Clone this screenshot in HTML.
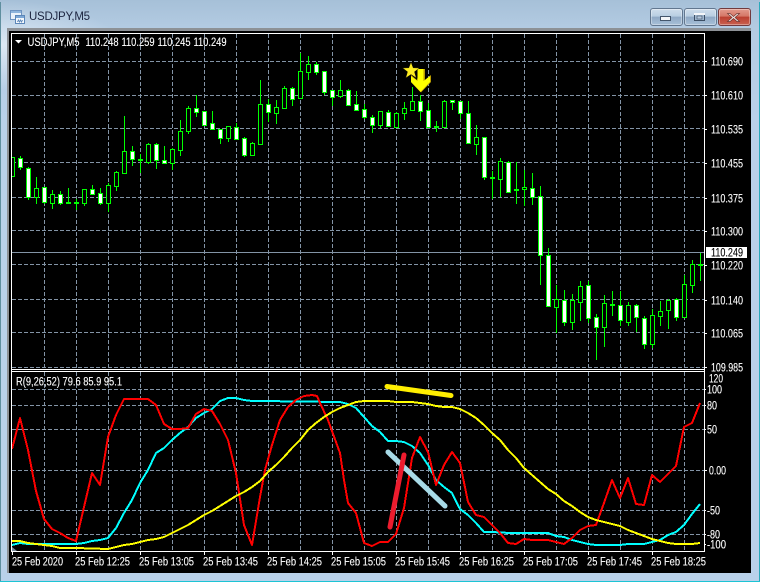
<!DOCTYPE html>
<html>
<head>
<meta charset="utf-8">
<title>USDJPY,M5</title>
<style>
html,body{margin:0;padding:0;background:#b9d1ea;}
body{width:760px;height:582px;overflow:hidden;position:relative;font-family:"Liberation Sans",sans-serif;}
#frame{position:absolute;left:0;top:0;width:760px;height:582px;background:linear-gradient(#a6c0d8 0,#b3cbe2 28px,#b9d1ea 120px,#b9d1ea 100%);}
#glow{position:absolute;left:1px;top:0;width:120px;height:90px;background:radial-gradient(ellipse at 0 50%,rgba(235,243,250,.75),rgba(235,243,250,0) 70%);}
#edgeB{position:absolute;left:0;top:581px;width:760px;height:1px;background:#1cc4d4;}
#edgeL{position:absolute;left:0;top:2px;width:1px;height:580px;background:#5f8f9f;}
#edgeR{position:absolute;left:759px;top:2px;width:1px;height:580px;background:#2aa9bb;}
#title{position:absolute;left:29px;top:10px;font-size:11.5px;line-height:15px;color:#1c2540;letter-spacing:-.25px;}
#inner{position:absolute;left:7px;top:28px;width:744px;height:545px;background:#8d9196;}
svg{position:absolute;left:0;top:0;}
.btn{position:absolute;top:8px;height:16px;width:31px;border:1px solid #62778f;border-radius:3px;box-sizing:content-box;background:linear-gradient(#cfdeec 0,#b8cee2 45%,#8fa9c5 50%,#a8c0d8 100%);box-shadow:inset 0 0 0 1px rgba(255,255,255,.35);}
#close{background:linear-gradient(#e39a8d 0,#d57767 45%,#bb3f30 50%,#c9604f 100%);border-color:#713a3e;}
</style>
</head>
<body>
<div id="frame"></div>
<div id="glow"></div>
<div id="edgeL"></div>
<div id="edgeR"></div>
<div id="edgeB"></div>
<div id="inner"></div>
<div id="title">USDJPY,M5</div>
<div class="btn" style="left:650px"></div>
<div class="btn" style="left:684px"></div>
<div class="btn" id="close" style="left:718px"></div>

<svg width="760" height="582" viewBox="0 0 760 582" xmlns="http://www.w3.org/2000/svg">
<!-- title icon -->
<g shape-rendering="crispEdges">
<rect x="10.5" y="10.5" width="11" height="9" fill="#eaf2fa" stroke="#6d93c0"/>
<rect x="11" y="11" width="10" height="2" fill="#8db4dc"/>
<rect x="15.5" y="15.5" width="9" height="8" fill="#f4f8fc" stroke="#5b86b8"/>
<rect x="16" y="16" width="8" height="2" fill="#7ba7d6"/>
<path d="M17.5 22l1-2 1 2 1-2 1 2 1-2" fill="none" stroke="#5b86b8"/>
</g>
<!-- window buttons -->
<rect x="660.5" y="16.5" width="10" height="4" fill="#f3f6f9" stroke="#44566c" shape-rendering="crispEdges"/>
<rect x="694.5" y="13.5" width="10" height="7" fill="#9fb7cf" stroke="#3c4e64" stroke-width="1" shape-rendering="crispEdges"/>
<rect x="694" y="13" width="11" height="2" fill="#f3f6f9" shape-rendering="crispEdges"/>
<rect x="697" y="16" width="5" height="3" fill="#b4c8dc" stroke="#3c4e64" stroke-width=".6"/>
<path d="M730 13.500l3.500 3 3.500-3h2.500l-4.500 4 4.500 4h-2.500l-3.500-3-3.500 3h-2.500l4.500-4-4.500-4z" fill="#f6ece9" stroke="#6e3a36" stroke-width=".7"/>

<!-- chart background -->
<rect x="9" y="31" width="742" height="542" fill="#000"/>

<!-- grid -->
<g stroke="#8394a6" stroke-width="1" stroke-dasharray="4 2" fill="none" shape-rendering="crispEdges">
<path d="M44.500 34V368M76.500 34V368M108.500 34V368M140.500 34V368M172.500 34V368M204.500 34V368M236.500 34V368M268.500 34V368M300.500 34V368M332.500 34V368M364.500 34V368M396.500 34V368M428.500 34V368M460.500 34V368M492.500 34V368M524.500 34V368M556.500 34V368M588.500 34V368M620.500 34V368M652.500 34V368M684.500 34V368"/>
<path d="M44.500 372V551M76.500 372V551M108.500 372V551M140.500 372V551M172.500 372V551M204.500 372V551M236.500 372V551M268.500 372V551M300.500 372V551M332.500 372V551M364.500 372V551M396.500 372V551M428.500 372V551M460.500 372V551M492.500 372V551M524.500 372V551M556.500 372V551M588.500 372V551M620.500 372V551M652.500 372V551M684.500 372V551"/>
<path d="M12 61.500H704M12 95.500H704M12 128.500H704M12 162.500H704M12 197.500H704M12 230.500H704M12 264.500H704M12 299.500H704M12 332.500H704M12 367.500H704"/>
<path d="M12 389.500H704M12 405.500H704M12 429.500H704M12 470.500H704M12 510.500H704M12 534.500H704"/>
</g>
<path d="M12 252.500H704" stroke="#8394a6" shape-rendering="crispEdges"/>

<!-- candles -->
<g shape-rendering="crispEdges">
<path fill="none" stroke="#00ff00" d="M20.500 156V170M28.500 167V200M36.500 177V204M44.500 187V204M52.500 190V209M60.500 191V205M68.500 188V204M76.500 199V210M84.500 189V206M92.500 185V194M100.500 188V205M108.500 183V212M116.500 171V191M124.500 116V173M132.500 146V166M140.500 154V173M148.500 143V164M156.500 143V169M164.500 146V163M172.500 148V170M180.500 120V156M188.500 106V134M196.500 95V117M204.500 111V126M212.500 111V129M220.500 129V144M228.500 126V142M236.500 123V139M244.500 137V157M252.500 142V156M260.500 80V145M268.500 99V122M276.500 100V124M284.500 86V109M292.500 87V106M300.500 53V98M308.500 56V80M316.500 62V75M324.500 71V95M332.500 90V106M340.500 80V98M348.500 89V105M356.500 91V110M364.500 104V119M372.500 115V133M380.500 111V128M388.500 110V126M396.500 112V127M404.500 102V120M412.500 87V111M420.500 95V121M428.500 103V127M436.500 121V132M444.500 100V127M452.500 100V110M460.500 101V119M468.500 101V143M476.500 125V155M484.500 137V180M492.500 171V199M500.500 158V197M508.500 161V193M516.500 162V204M524.500 170V206M532.500 173V205M540.500 186V285M548.500 248V307M556.500 285V333M564.500 290V326M572.500 294V330M580.500 281V321M588.500 281V323M596.500 314V360M604.500 295V347M612.500 291V316M620.500 291V326M628.500 302V326M636.500 304V332M644.500 316V349M652.500 309V348M660.500 301V326M668.500 299V329M676.500 298V321M684.500 275V318M692.500 260V293M700.500 253V281"/>
<path fill="#ffffff" stroke="#00ff00" d="M18.500 158.500h4v9h-4zM26.500 168.500h4v29h-4zM42.500 187.500h4v15h-4zM58.500 194.500h4v9h-4zM90.500 189.500h4v5h-4zM98.500 193.500h4v10h-4zM130.500 151.500h4v8h-4zM154.500 144.500h4v16h-4zM162.500 160.500h4v3h-4zM194.500 108.500h4v4h-4zM202.500 111.500h4v14h-4zM210.500 123.500h4v6h-4zM218.500 129.500h4v9h-4zM234.500 127.500h4v12h-4zM242.500 138.500h4v17h-4zM266.500 104.500h4v8h-4zM290.500 88.500h4v11h-4zM314.500 64.500h4v8h-4zM322.500 71.500h4v21h-4zM330.500 90.500h4v7h-4zM346.500 90.500h4v15h-4zM354.500 104.500h4v6h-4zM362.500 109.500h4v8h-4zM370.500 117.500h4v8h-4zM386.500 112.500h4v14h-4zM418.500 101.500h4v10h-4zM426.500 110.500h4v17h-4zM450.500 100.500h4v2h-4zM458.500 101.500h4v12h-4zM466.500 113.500h4v30h-4zM482.500 137.500h4v40h-4zM506.500 162.500h4v30h-4zM530.500 188.500h4v9h-4zM538.500 196.500h4v59h-4zM546.500 255.500h4v51h-4zM562.500 300.500h4v22h-4zM586.500 285.500h4v33h-4zM594.500 317.500h4v10h-4zM618.500 305.500h4v15h-4zM634.500 305.500h4v12h-4zM642.500 318.500h4v26h-4zM674.500 299.500h4v18h-4z"/>
<path fill="#000000" stroke="#00ff00" d="M11.500 157.500h3v19h-3zM34.500 188.500h4v9h-4zM50.500 194.500h4v9h-4zM82.500 189.500h4v14h-4zM106.500 185.500h4v18h-4zM114.500 172.500h4v14h-4zM122.500 151.500h4v22h-4zM146.500 144.500h4v18h-4zM170.500 149.500h4v14h-4zM178.500 131.500h4v19h-4zM186.500 108.500h4v23h-4zM226.500 126.500h4v12h-4zM250.500 143.500h4v12h-4zM258.500 104.500h4v40h-4zM274.500 107.500h4v6h-4zM282.500 88.500h4v20h-4zM298.500 71.500h4v27h-4zM306.500 64.500h4v8h-4zM338.500 90.500h4v6h-4zM378.500 111.500h4v14h-4zM394.500 113.500h4v14h-4zM402.500 108.500h4v5h-4zM410.500 101.500h4v9h-4zM442.500 101.500h4v26h-4zM474.500 137.500h4v7h-4zM498.500 161.500h4v18h-4zM522.500 187.500h4v2h-4zM554.500 299.500h4v8h-4zM570.500 300.500h4v22h-4zM578.500 286.500h4v16h-4zM602.500 303.500h4v24h-4zM626.500 305.500h4v17h-4zM650.500 315.500h4v29h-4zM658.500 311.500h4v5h-4zM666.500 300.500h4v10h-4zM682.500 284.500h4v33h-4zM690.500 264.500h4v21h-4z"/>
<path fill="none" stroke="#00ff00" stroke-width="2" d="M66 203h5M74 203h5M138 160h5M434 127h5M490 178h5M514 190h5M610 305h5M698 265h5"/>
</g>

<!-- arrow and star -->
<polygon points="419,69 425,69 425,80 431,75 431,82 421,92.500 411,82 411,75 417,80" fill="#b89a00"/>
<polygon points="417.500,69 423.500,69 423.500,81 430,76 430,82 420.500,92 411,82 411,76 417.500,81" fill="#ffff00"/>
<polygon points="411,62 413.200,67.800 419.500,68 414.500,71.800 416.300,78 411,74.500 405.700,78 407.500,71.800 402.500,68 408.800,67.800" fill="#ffee22" stroke="#1a1500" stroke-width=".5"/>

<!-- indicator lines -->
<g fill="none" stroke-width="2" stroke-linejoin="round" shape-rendering="crispEdges">
<polyline stroke="#00ffff" points="12,545 20,543 28,544 76,544 84,543 92,541 100,540 108,538 116,528 124,513 132,500 140,483 148,470 156,453 164,448 172,440 180,433 188,427 196,418 204,413 212,409 220,401 228,398 236,398 244,400 252,401 260,401 340,402 348,404 356,408 364,417 372,426 380,432 388,441 396,441 404,442 412,446 420,453 428,465 436,480 444,487 452,493 460,509 468,515 476,523 484,532 492,532 510,533 548,533 556,536 564,537 572,540 580,542 588,544 596,545 620,545 628,544 644,544 652,542 660,540 668,535 676,532 684,525 692,514 700,504"/>
<polyline stroke="#ff0000" points="12,449 20,418 28,450 36,491 44,519 52,529 60,533 68,538 76,541 92,473 100,485 108,437 116,415 124,399 148,399 156,405 164,424 172,429 180,429 188,428 196,414 204,409 212,411 220,424 228,440 236,473 244,525 252,545 260,497 265,470 272,445 280,420 288,407 296,400 304,396 312,395 317,396 320,403 328,420 336,442 340,453 344,480 348,503 356,513 364,543 372,546 380,542 388,542 396,534 404,508 412,458 420,437 428,452 436,485 444,465 452,452 460,463 468,502 476,515 484,517 492,525 500,533 508,543 516,544 524,539 532,540 548,540 556,542 564,544 572,538 580,530 588,526 596,525 604,503 612,480 620,498 628,478 636,504 644,505 652,475 660,482 668,474 676,466 684,427 692,423 700,403"/>
<polyline stroke="#ffff00" points="12,541 20,541 28,543 36,544 44,545 52,546 60,548 76,548 108,549 116,547 124,545 132,544 140,542 148,540 156,539 164,537 172,533 180,529 188,525 196,520 204,515 212,511 220,506 228,501 236,496 244,492 252,487 260,481 268,472 276,465 284,457 292,448 300,440 308,430 316,423 324,417 332,412 340,408 348,405 356,402 364,401 388,401 396,402 412,402 420,403 428,404 436,406 444,407 452,407 460,409 468,413 476,418 484,425 492,433 500,440 508,450 516,458 524,468 532,475 540,482 548,489 556,494 564,501 572,506 580,512 588,517 596,520 604,522 612,524 620,526 628,530 636,533 644,536 652,539 660,541 668,543 676,544 692,544 700,543"/>
</g>

<!-- hand-drawn trend lines -->
<g fill="none" stroke-width="5" stroke-linecap="round">
<path stroke="#ffee00" d="M387 386.500L451 395.500"/>
<path stroke="#a8dbe8" d="M388 452L445 506"/>
<path stroke="#ed1c2e" d="M404 455L390 527"/>
</g>

<!-- frame lines -->
<g shape-rendering="crispEdges" fill="#ffffff">
<rect x="11" y="33" width="694" height="1"/>
<rect x="11" y="33" width="1" height="519"/>
<rect x="704" y="33" width="1" height="519"/>
<rect x="11" y="369" width="694" height="1"/>
<rect x="11" y="371" width="694" height="1"/>
<rect x="11" y="551" width="694" height="1"/>
<path stroke="#ffffff" fill="none" d="M705 61.500h2M705 95.500h2M705 129.500h2M705 163.500h2M705 198.500h2M705 231.500h2M705 265.500h2M705 300.500h2M705 333.500h2M705 367.500h2M705 389.500h1M705 405.500h1M705 429.500h1M705 470.500h2M705 510.500h1M705 534.500h1M705 544.500h1"/>
<path stroke="#ffffff" fill="none" d="M12.500 552v3M76.500 552v3M140.500 552v3M204.500 552v3M268.500 552v3M332.500 552v3M396.500 552v3M460.500 552v3M524.500 552v3M588.500 552v3M652.500 552v3"/>
</g>
<polygon points="12,547 17,551 12,551" fill="#778899"/>
<polygon points="15,40 22,40 18.500,43.500" fill="#ffffff"/>

<!-- price label -->
<rect x="706" y="247" width="41" height="11" fill="#ffffff" shape-rendering="crispEdges"/>

<!-- text -->
<g font-family="'Liberation Sans',sans-serif" font-size="11.500" fill="#ffffff" stroke="#ffffff" stroke-width=".12">
<text x="27.500" y="46" textLength="52" lengthAdjust="spacingAndGlyphs">USDJPY,M5</text>
<text x="85.500" y="46" textLength="33" lengthAdjust="spacingAndGlyphs">110.248</text>
<text x="121.500" y="46" textLength="33" lengthAdjust="spacingAndGlyphs">110.259</text>
<text x="157.500" y="46" textLength="33" lengthAdjust="spacingAndGlyphs">110.245</text>
<text x="193.500" y="46" textLength="33" lengthAdjust="spacingAndGlyphs">110.249</text>
<text x="16" y="385.500" textLength="106" lengthAdjust="spacingAndGlyphs">R(9,26,52) 79.6 85.9 95.1</text>

<text x="711" y="65.500" textLength="32" lengthAdjust="spacingAndGlyphs">110.690</text>
<text x="711" y="99.500" textLength="32" lengthAdjust="spacingAndGlyphs">110.610</text>
<text x="711" y="133.500" textLength="32" lengthAdjust="spacingAndGlyphs">110.535</text>
<text x="711" y="167.500" textLength="32" lengthAdjust="spacingAndGlyphs">110.455</text>
<text x="711" y="202.500" textLength="32" lengthAdjust="spacingAndGlyphs">110.375</text>
<text x="711" y="235.500" textLength="32" lengthAdjust="spacingAndGlyphs">110.300</text>
<text x="711" y="256.500" textLength="32" lengthAdjust="spacingAndGlyphs" fill="#000000" stroke="#000000">110.249</text>
<text x="711" y="269.500" textLength="32" lengthAdjust="spacingAndGlyphs">110.220</text>
<text x="711" y="304.500" textLength="32" lengthAdjust="spacingAndGlyphs">110.140</text>
<text x="711" y="337.500" textLength="32" lengthAdjust="spacingAndGlyphs">110.065</text>
<text x="711" y="371.500" textLength="32" lengthAdjust="spacingAndGlyphs">109.985</text>

<text x="709" y="382.500" textLength="14" lengthAdjust="spacingAndGlyphs">120</text>
<text x="707" y="393.500" textLength="15" lengthAdjust="spacingAndGlyphs">100</text>
<text x="707" y="409.500" textLength="10" lengthAdjust="spacingAndGlyphs">80</text>
<text x="707" y="433.500" textLength="10" lengthAdjust="spacingAndGlyphs">50</text>
<text x="709" y="474.500" textLength="17" lengthAdjust="spacingAndGlyphs">0.00</text>
<text x="707" y="514.500" textLength="13" lengthAdjust="spacingAndGlyphs">-50</text>
<text x="707" y="538.500" textLength="13" lengthAdjust="spacingAndGlyphs">-80</text>
<text x="707" y="548.500" textLength="19" lengthAdjust="spacingAndGlyphs">-100</text>

<text x="12" y="565.500" textLength="51" lengthAdjust="spacingAndGlyphs">25 Feb 2020</text>
<text x="75" y="565.500" textLength="55" lengthAdjust="spacingAndGlyphs">25 Feb 12:25</text>
<text x="139" y="565.500" textLength="55" lengthAdjust="spacingAndGlyphs">25 Feb 13:05</text>
<text x="203" y="565.500" textLength="55" lengthAdjust="spacingAndGlyphs">25 Feb 13:45</text>
<text x="267" y="565.500" textLength="55" lengthAdjust="spacingAndGlyphs">25 Feb 14:25</text>
<text x="331" y="565.500" textLength="55" lengthAdjust="spacingAndGlyphs">25 Feb 15:05</text>
<text x="395" y="565.500" textLength="55" lengthAdjust="spacingAndGlyphs">25 Feb 15:45</text>
<text x="459" y="565.500" textLength="55" lengthAdjust="spacingAndGlyphs">25 Feb 16:25</text>
<text x="523" y="565.500" textLength="55" lengthAdjust="spacingAndGlyphs">25 Feb 17:05</text>
<text x="587" y="565.500" textLength="55" lengthAdjust="spacingAndGlyphs">25 Feb 17:45</text>
<text x="651" y="565.500" textLength="55" lengthAdjust="spacingAndGlyphs">25 Feb 18:25</text>
</g>
</svg>
</body>
</html>
